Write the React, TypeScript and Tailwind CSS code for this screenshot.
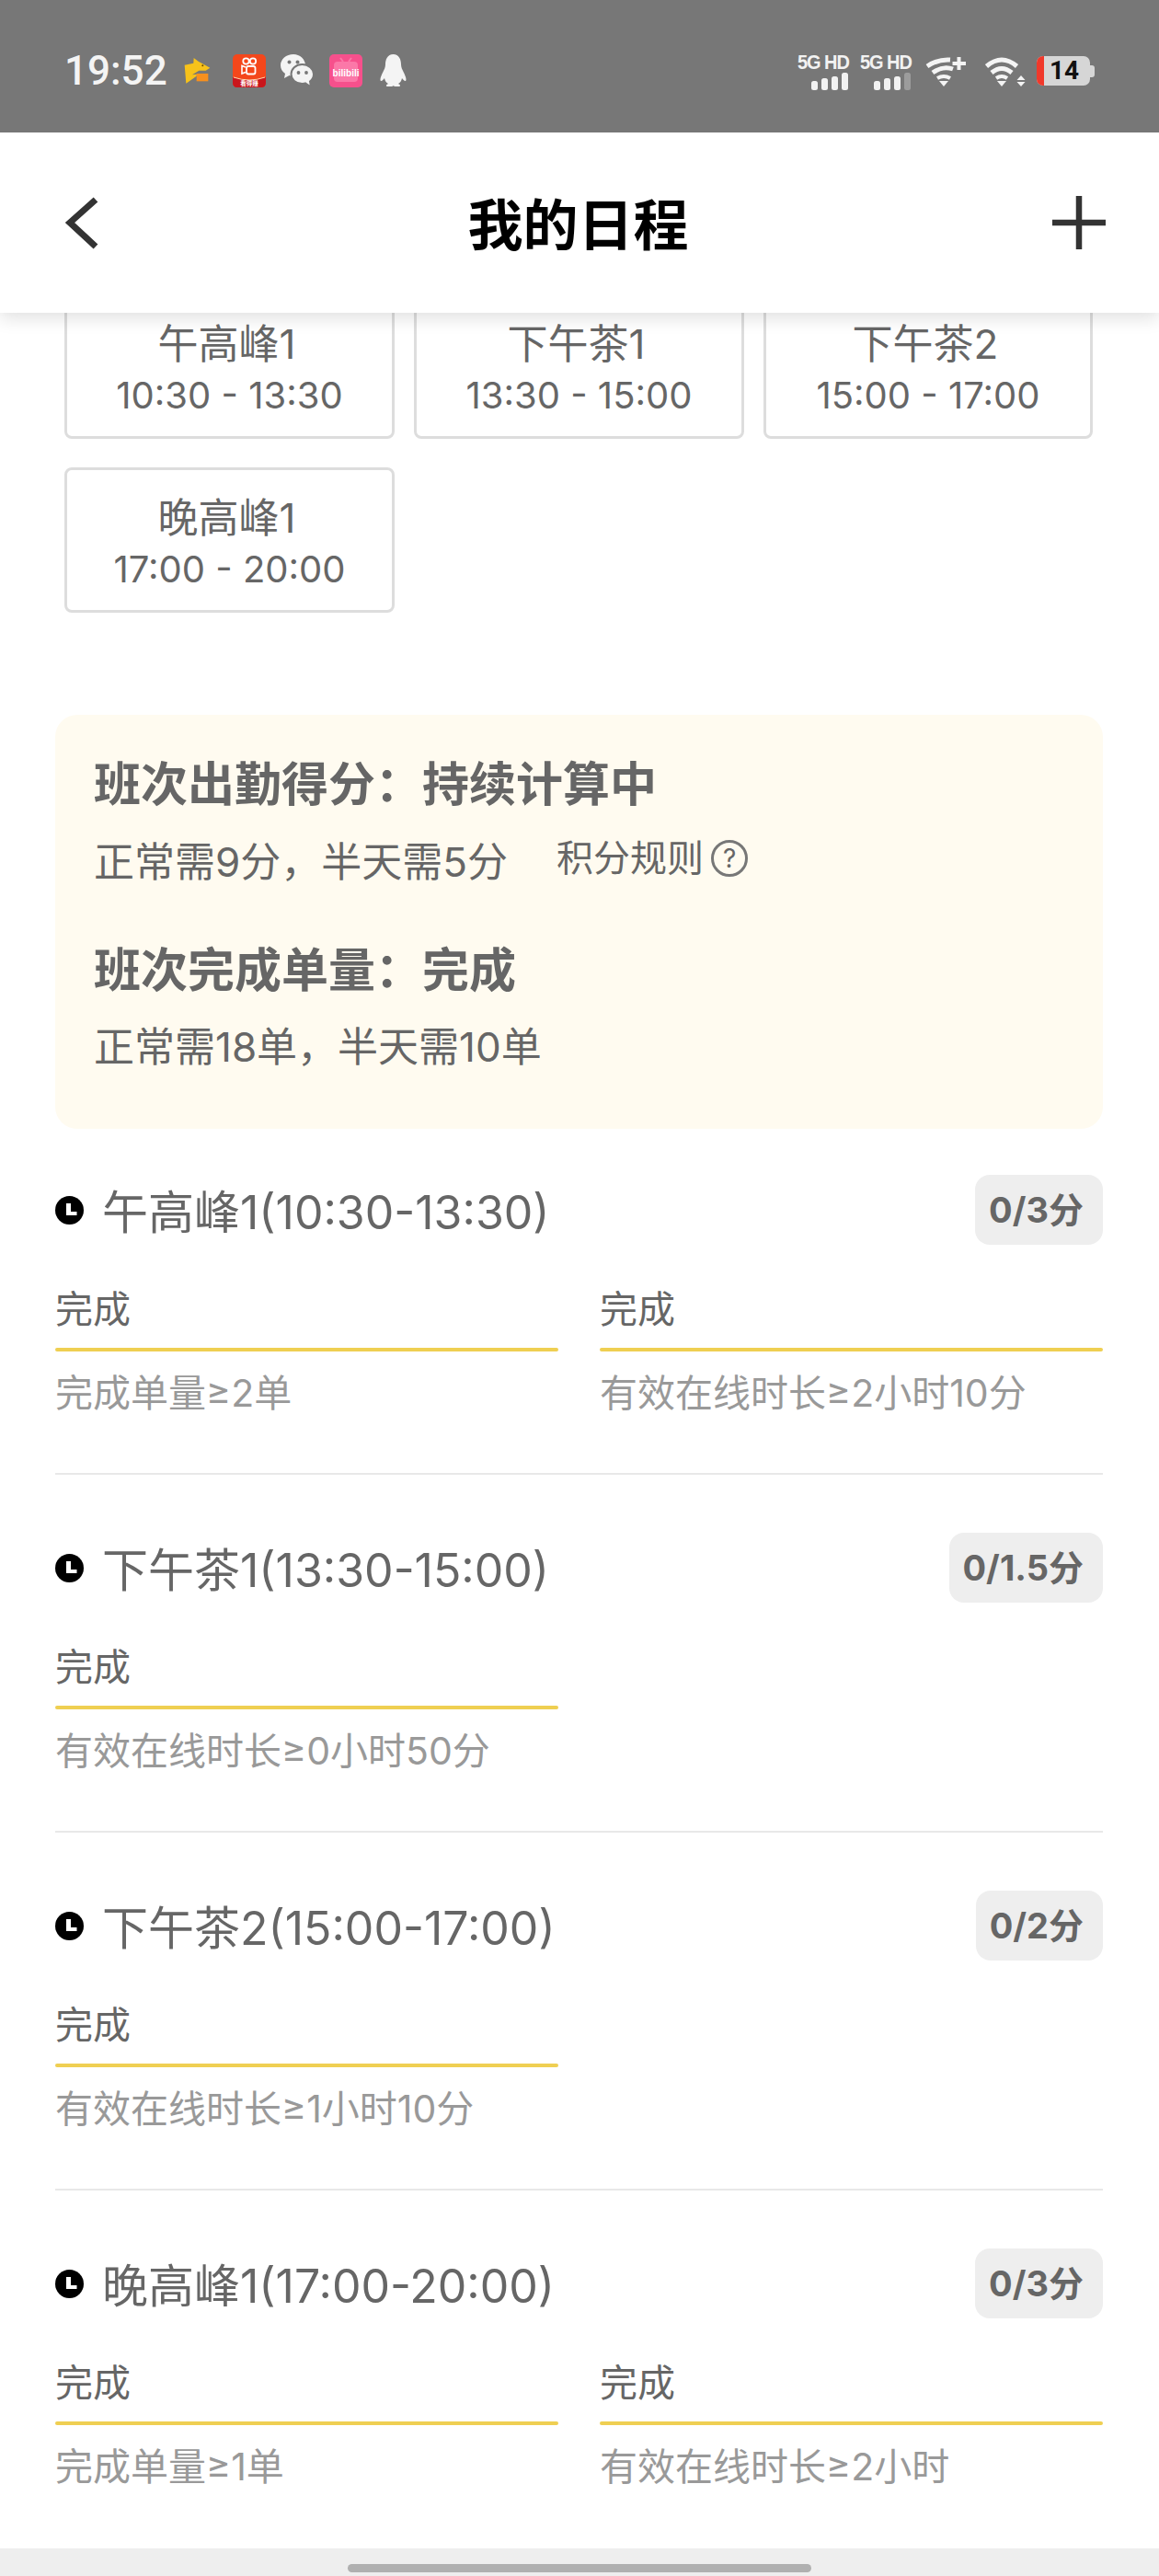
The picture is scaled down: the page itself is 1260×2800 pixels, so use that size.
import React from "react";

const cards = [
  ["午高峰1", "10:30 - 13:30"],
  ["下午茶1", "13:30 - 15:00"],
  ["下午茶2", "15:00 - 17:00"],
  ["晚高峰1", "17:00 - 20:00"],
];

type Sec = { title: string; score: string; items: [string, string?]; };
const sections: Sec[] = [
  { title: "午高峰1(10:30-13:30)", score: "0/3分", items: ["完成单量≥2单", "有效在线时长≥2小时10分"] },
  { title: "下午茶1(13:30-15:00)", score: "0/1.5分", items: ["有效在线时长≥0小时50分"] },
  { title: "下午茶2(15:00-17:00)", score: "0/2分", items: ["有效在线时长≥1小时10分"] },
  { title: "晚高峰1(17:00-20:00)", score: "0/3分", items: ["完成单量≥1单", "有效在线时长≥2小时"] },
];

function Kangaroo() {
  return (
    <svg width="30" height="30" viewBox="10 30 90 90" className="ml-[17px]">
      <path d="M15 56 L44 50 L45 33 L60 44 L98 65 L84 74 L62 74 L40 88 L55 86 L54 92 L20 116 Z" fill="#f7c21a" />
      <circle cx="74" cy="58" r="3" fill="#6b4a00" />
      <rect x="54" y="84" width="38" height="25" fill="#f7901e" />
    </svg>
  );
}

function Kuaishou() {
  return (
    <svg width="36" height="36" viewBox="0 0 36 36" className="ml-[24px]">
      <rect width="36" height="36" rx="5" fill="#f4471b" />
      <path d="M0 25 Q18 31 36 25 L36 31 Q36 36 31 36 L5 36 Q0 36 0 31 Z" fill="#c9161c" />
      <path d="M1 25 Q18 31 35 25" fill="none" stroke="#ffd7b0" strokeWidth="1" />
      <circle cx="14.5" cy="7.5" r="3.2" fill="none" stroke="#fff" strokeWidth="1.8" />
      <circle cx="22" cy="7.5" r="3.2" fill="none" stroke="#fff" strokeWidth="1.8" />
      <rect x="15" y="13" width="9.5" height="8.5" rx="2" fill="none" stroke="#fff" strokeWidth="1.8" />
      <path d="M14 14 L10 12.5 L10 21 L14 19.5" fill="none" stroke="#fff" strokeWidth="1.6" />
      <text x="18" y="34" textAnchor="middle" fontSize="6.5" fontWeight="700" fill="#fff" fontFamily="'Noto Sans CJK SC', sans-serif">看得赚</text>
    </svg>
  );
}

function WeChat() {
  return (
    <svg width="36" height="36" viewBox="0 0 36 36" className="ml-[16px]">
      <path d="M14 0 C6 0 0 5.5 0 12 C0 16 2 19 5 21 L4 26 L9.5 23 C11 23.5 12.5 24 14 24 C22 24 27 18 27 12 C27 5.5 21 0 14 0 Z" fill="#f4f4f4" />
      <circle cx="9.5" cy="8.5" r="2" fill="#777" />
      <circle cx="18.5" cy="8.5" r="2" fill="#777" />
      <path d="M23.5 11 C16.5 11 11.5 16 11.5 21.5 C11.5 27.5 16.5 32 23.5 32 C25 32 26 32 27 31.5 L33 35.5 L32 29.5 C34.5 27.5 36 25 36 21.5 C36 16 30.5 11 23.5 11 Z" fill="#f4f4f4" stroke="#777" strokeWidth="2" />
      <circle cx="19.5" cy="20" r="1.9" fill="#777" />
      <circle cx="28" cy="20" r="1.9" fill="#777" />
    </svg>
  );
}

function Bili() {
  return (
    <svg width="36" height="36" viewBox="0 0 36 36" className="ml-[17px]">
      <rect width="36" height="36" rx="5" fill="#f6508c" />
      <rect x="5" y="8" width="26" height="22" rx="4" fill="#fb78a8" />
      <path d="M12 4 L15 8 M24 4 L21 8" stroke="#fb78a8" strokeWidth="2" />
      <text x="18" y="24" textAnchor="middle" fontSize="11" fontWeight="700" fill="#fff" textLength="29" lengthAdjust="spacingAndGlyphs" fontFamily="'Liberation Sans', sans-serif">bilibili</text>
    </svg>
  );
}

function QQ() {
  return (
    <svg width="31" height="36" viewBox="0 0 31 36" className="ml-[18px]">
      <path d="M15.5 0 C9 0 7 6 7 11 C7 14 6 16 4 20 C1.5 25 1 28 2 29 C3 29.5 5 27.5 6 26 C6.5 29 8 31 10 32 C8 33 7 34.5 9 35 L14 35 C15 35 15.5 34 15.5 34 C15.5 34 16.5 35 17.5 35 L22 35 C24 34.5 23 33 21 32 C23 31 24.5 29 25 26 C26 27.5 28 29.5 29 29 C30 28 29.5 25 27 20 C25 16 24 14 24 11 C24 6 22 0 15.5 0 Z" fill="#f4f4f4" />
    </svg>
  );
}

function Signal({ dim }: { dim?: boolean }) {
  const h = [10, 13, 15, 19];
  const x = [0, 11, 22, 33];
  return (
    <svg width="41" height="20" viewBox="0 0 41 20" className="block ml-auto">
      {h.map((v, i) => (
        <rect key={i} x={x[i]} y={20 - v} width="7" height={v} rx="2.5" fill={dim && i === 3 ? "#9c9c9c" : "#f2f2f2"} />
      ))}
    </svg>
  );
}

function NetGroup({ dim }: { dim?: boolean }) {
  return (
    <div className="w-[57px] flex flex-col">
      <div className="h-[21px] text-[20px] leading-[20px] font-bold tracking-[-1px] whitespace-nowrap text-[#f2f2f2] text-right scale-y-110 font-['Liberation_Sans',sans-serif]">
        5G HD
      </div>
      <Signal dim={dim} />
    </div>
  );
}

function WifiPlus() {
  return (
    <svg width="44" height="33" viewBox="0 0 44 33" className="ml-[15px]">
      <path d="M2 11 Q14 3 27 4" fill="none" stroke="#f4f4f4" strokeWidth="5" />
      <path d="M8 18 Q19 10 30 14" fill="none" stroke="#f4f4f4" strokeWidth="5" />
      <path d="M13 24 Q20 20 27 24" fill="none" stroke="#f4f4f4" strokeWidth="4" />
      <path d="M15 27 L25 27 L20 33 Z" fill="#f4f4f4" />
      <path d="M36.5 1 V15 M29.5 8 H44" stroke="#f4f4f4" strokeWidth="4" />
    </svg>
  );
}

function Wifi() {
  return (
    <svg width="44" height="33" viewBox="0 0 44 33" className="ml-[21px]">
      <path d="M1.5 11 Q18 -3 34.5 11" fill="none" stroke="#f4f4f4" strokeWidth="5" />
      <path d="M7 18 Q18 9 29 18" fill="none" stroke="#f4f4f4" strokeWidth="5" />
      <path d="M12 24 Q18 20 24 24" fill="none" stroke="#f4f4f4" strokeWidth="4" />
      <path d="M13 27 L23 27 L18 33 Z" fill="#f4f4f4" />
      <path d="M39 21 L43.5 26 L34.5 26 Z M34.5 28 L43.5 28 L39 33 Z" fill="#f4f4f4" />
    </svg>
  );
}

function Battery() {
  return (
    <div className="ml-[12px] flex items-center">
      <div className="w-[58px] h-[32px] rounded-[7px] bg-[#d6d6d6] overflow-hidden flex">
        <div className="w-[8px] bg-[#f0392b]" />
        <div className="pl-[6px] text-[28px] leading-[32px] font-bold text-[#111] font-['Roboto',sans-serif]">14</div>
      </div>
      <div className="w-[5px] h-[13px] rounded-r-[3px] bg-[#d6d6d6]" />
    </div>
  );
}

function ClockIcon() {
  return (
    <svg width="31" height="31" viewBox="0 0 31 31" className="shrink-0">
      <circle cx="15.5" cy="15.5" r="15.5" fill="#000" />
      <path d="M12 8 H17 V17 H23.5 V21 H12 Z" fill="#fff" />
    </svg>
  );
}

export default function App() {
  return (
    <div className="w-[1260px] h-[2800px] bg-white flex flex-col overflow-hidden font-['Inter','Noto_Sans_CJK_SC',sans-serif]">
      <div className="h-[144px] shrink-0 bg-[#777777] flex items-center pl-[70px] pr-[70px] pt-[10px] relative z-20">
        <span className="text-[44px] leading-[52px] font-medium text-[#f4f4f4] font-['Roboto',sans-serif]">19:52</span>
        <Kangaroo />
        <Kuaishou />
        <WeChat />
        <Bili />
        <QQ />
        <div className="ml-auto flex items-center">
          <div className="flex gap-[11px]">
            <NetGroup />
            <NetGroup dim />
          </div>
          <WifiPlus />
          <Wifi />
          <Battery />
        </div>
      </div>

      <header className="h-[196px] shrink-0 bg-white relative z-10 shadow-[0_6px_18px_rgba(0,0,0,0.12)] flex items-center justify-between pl-[69px] pr-[58px]">
        <svg width="44" height="60" viewBox="0 0 44 60">
          <path d="M36 6 L8 31 L36 57" fill="none" stroke="#333" strokeWidth="7" transform="translate(-1 -1)" />
        </svg>
        <h1 className="text-[60px] leading-[80px] pt-[6px] font-bold text-black">我的日程</h1>
        <svg width="58" height="58" viewBox="0 0 58 58">
          <path d="M29 0 V58 M0 29 H58" stroke="#333" strokeWidth="6.5" />
        </svg>
      </header>

      <main className="flex-1 min-h-0 overflow-hidden -mt-[21px]">
        <div className="pl-[70px] grid grid-cols-[359px_359px_358px] gap-x-[21px] gap-y-[31px]">
          {cards.map(([a, b]) => (
            <div key={a} className="h-[158px] border-[3px] border-[#dddddd] rounded-[8px] flex flex-col items-center justify-center pt-[7px] text-[#666]">
              <div className="text-[44px] leading-[56px] pr-[6px]">{a}</div>
              <div className="text-[40px] leading-[56px]">{b}</div>
            </div>
          ))}
        </div>

        <div className="mt-[111px] ml-[60px] mr-[61px] rounded-[24px] bg-[#fffbf0] pl-[42px] pt-[42px] pb-[59px] text-[#666]">
          <div className="h-[68px] leading-[68px] text-[51px] font-bold">{"班次出勤得分\uFF1A持续计算中"}</div>
          <div className="mt-[20px] h-[60px] flex items-center text-[44px]">
            <span>{"正常需9分\uFF0C半天需5分"}</span>
            <span className="ml-[53px] -mt-[8px] text-[40px]">积分规则</span>
            <span className="ml-[8px] -mt-[8px] w-[40px] h-[40px] rounded-full border-[3px] border-[#777] flex items-center justify-center text-[28px] leading-none">?</span>
          </div>
          <div className="mt-[54px] h-[68px] leading-[68px] text-[51px] font-bold">{"班次完成单量\uFF1A完成"}</div>
          <div className="mt-[19px] h-[60px] leading-[60px] text-[44px]">{"正常需18单\uFF0C半天需10单"}</div>
        </div>

        <div className="ml-[60px] mr-[61px]">
          {sections.map((s, i) => (
            <section key={s.title} className={i === 0 ? "pt-[50px]" : "pt-[63px]"}>
              <div className="h-[76px] flex items-center">
                <ClockIcon />
                <div className="ml-[20px] pt-[6px] text-[50px] leading-[76px] text-[#666]">{s.title}</div>
                <div className="ml-auto h-[76px] rounded-[16px] bg-[#eeeeee] pl-[15px] pr-[21px] flex items-center text-[38px] leading-[72px] font-bold text-[#666]">
                  {s.score}
                </div>
              </div>
              <div className="mt-[42px] grid grid-cols-2 gap-x-[45px]">
                {s.items.map((t) => (
                  <div key={t}>
                    <div className="h-[56px] leading-[56px] text-[41px] text-[#666]">完成</div>
                    <div className="mt-[14px] h-[4px] rounded-[2px] bg-[#efcf52]" />
                    <div className="mt-[17px] h-[56px] leading-[56px] text-[41px] text-[#999]">{t}</div>
                  </div>
                ))}
              </div>
              {i < sections.length - 1 && <div className="mt-[59px] h-[2px] bg-[#e8e8e8]" />}
            </section>
          ))}
        </div>
      </main>

      <div className="h-[30px] shrink-0 bg-[#eeeeee] flex justify-center pt-[17px]">
        <div className="w-[504px] h-[9px] rounded-full bg-[#b0b0b0]" />
      </div>
    </div>
  );
}
